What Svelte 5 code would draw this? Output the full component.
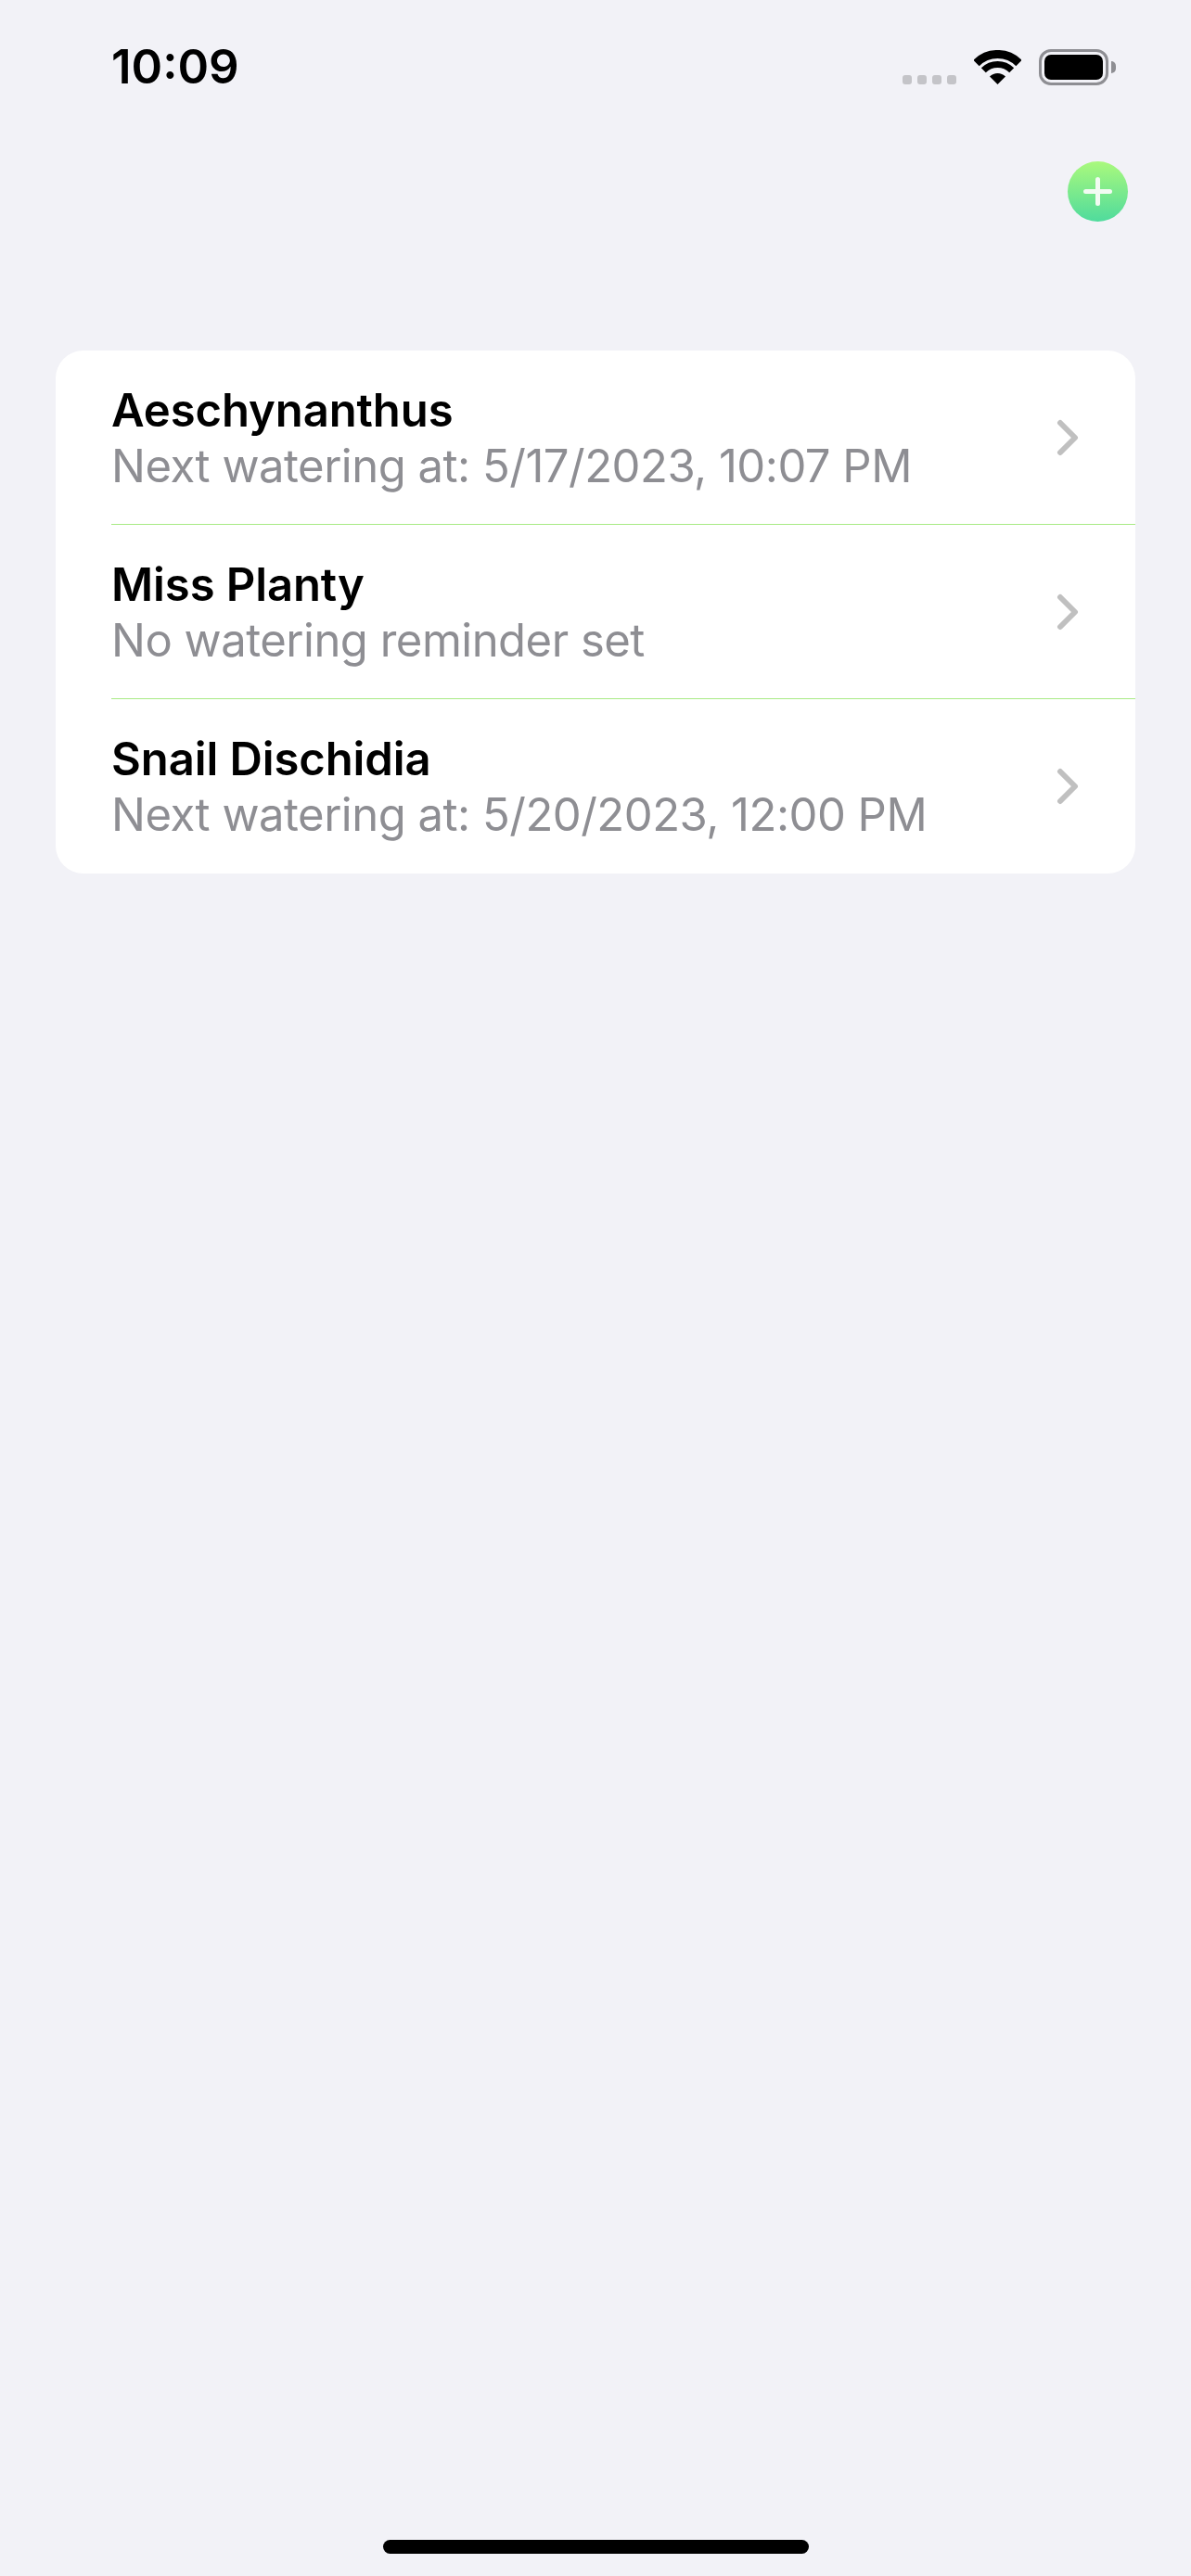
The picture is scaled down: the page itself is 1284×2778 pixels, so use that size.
<script lang="ts">
	const plants = [
		{ name: 'Aeschynanthus', note: 'Next watering at: 5/17/2023, 10:07 PM' },
		{ name: 'Miss Planty', note: 'No watering reminder set' },
		{ name: 'Snail Dischidia', note: 'Next watering at: 5/20/2023, 12:00 PM' },
	];
</script>

<div class="screen">
	<header class="status">
		<span class="time">10:09</span>
		<div class="indicators">
			<div class="signal">
				<i></i><i></i><i></i><i></i>
			</div>
			<svg class="wifi" width="51" height="37" viewBox="0 0 51 37">
				<path d="M2.5 14A32.5 32.5 0 0 1 48.5 14" fill="none" stroke="#000" stroke-width="9" />
				<path d="M10.3 21.8A21.5 21.5 0 0 1 40.7 21.8" fill="none" stroke="#000" stroke-width="7" />
				<path d="M25.5 37L17 28.5A12 12 0 0 1 34 28.5Z" fill="#000" />
			</svg>
			<div class="battery">
				<div class="level"></div>
				<div class="cap"></div>
			</div>
		</div>
	</header>

	<nav class="toolbar">
		<button class="add" aria-label="Add plant">
			<svg width="31" height="31" viewBox="0 0 31 31">
				<path d="M15.5 2.5V28.500M2.500 15.500H28.500" stroke="#f2fbf2" stroke-width="5" stroke-linecap="round" />
			</svg>
		</button>
	</nav>

	<ul class="list">
		{#each plants as plant}
			<li class="row">
				<div class="labels">
					<span class="name">{plant.name}</span>
					<span class="note">{plant.note}</span>
				</div>
				<svg class="chevron" width="24" height="40" viewBox="0 0 24 40">
					<path d="M4 4L20 20L4 36" fill="none" stroke="#c0c0c0" stroke-width="6" stroke-linecap="round" stroke-linejoin="round" />
				</svg>
			</li>
		{/each}
	</ul>

	<div class="home-indicator"></div>
</div>

<style>
	:global(body) {
		margin: 0;
		background: #f2f2f7;
	}

	.screen {
		display: flex;
		flex-direction: column;
		height: 2778px;
		background: #f2f2f7;
		font-family: Inter, 'Liberation Sans', sans-serif;
		color: #000;
	}

	.status {
		display: flex;
		justify-content: space-between;
		align-items: flex-start;
		height: 174px;
		box-sizing: border-box;
		padding: 41px 89px 0 120px;
	}

	.time {
		font-size: 51px;
		line-height: 62px;
		font-weight: 600;
	}

	.indicators {
		display: flex;
		align-items: flex-start;
		padding-top: 12px;
	}

	.signal {
		display: flex;
		gap: 6px;
		margin-top: 28px;
		margin-right: 19px;
	}

	.signal i {
		width: 10px;
		height: 10px;
		border-radius: 3px;
		background: #c4c4c8;
	}

	.wifi {
		display: block;
		margin-top: 1px;
		margin-right: 19px;
	}

	.battery {
		position: relative;
		box-sizing: border-box;
		width: 75px;
		height: 39px;
		padding: 3px;
		border: 3px solid #8e8e93;
		border-radius: 13px;
	}

	.level {
		height: 100%;
		border-radius: 7px;
		background: #000;
	}

	.cap {
		position: absolute;
		top: 10px;
		right: -11px;
		width: 5px;
		height: 13px;
		border-radius: 0 6px 6px 0;
		background: #8e8e93;
	}

	.toolbar {
		display: flex;
		justify-content: flex-end;
		height: 204px;
		padding-right: 68px;
	}

	.add {
		display: flex;
		align-items: center;
		justify-content: center;
		width: 65px;
		height: 65px;
		padding: 0;
		border: none;
		border-radius: 50%;
		background: linear-gradient(#aaf97c, #4fdb9d);
	}

	.list {
		display: flex;
		flex-direction: column;
		margin: 0 60px;
		padding: 0;
		list-style: none;
		background: #fff;
		border-radius: 30px;
		overflow: hidden;
	}

	.row {
		position: relative;
		display: flex;
		align-items: center;
		justify-content: space-between;
		box-sizing: border-box;
		height: 188px;
		padding: 0 61px 0 60px;
	}

	.row + .row::before {
		content: '';
		position: absolute;
		top: -1px;
		left: 60px;
		right: 0;
		height: 1px;
		background: #a8ea84;
	}

	.labels {
		display: flex;
		flex-direction: column;
	}

	.name {
		margin-top: 2px;
		margin-bottom: -2px;
		font-size: 49px;
		line-height: 62px;
		font-weight: 600;
		letter-spacing: -0.1px;
	}

	.note {
		font-size: 49px;
		line-height: 62px;
		color: #8e8e93;
		letter-spacing: -0.5px;
	}

	.home-indicator {
		width: 459px;
		height: 15px;
		margin: auto auto 24px;
		border-radius: 8px;
		background: #000;
	}
</style>
